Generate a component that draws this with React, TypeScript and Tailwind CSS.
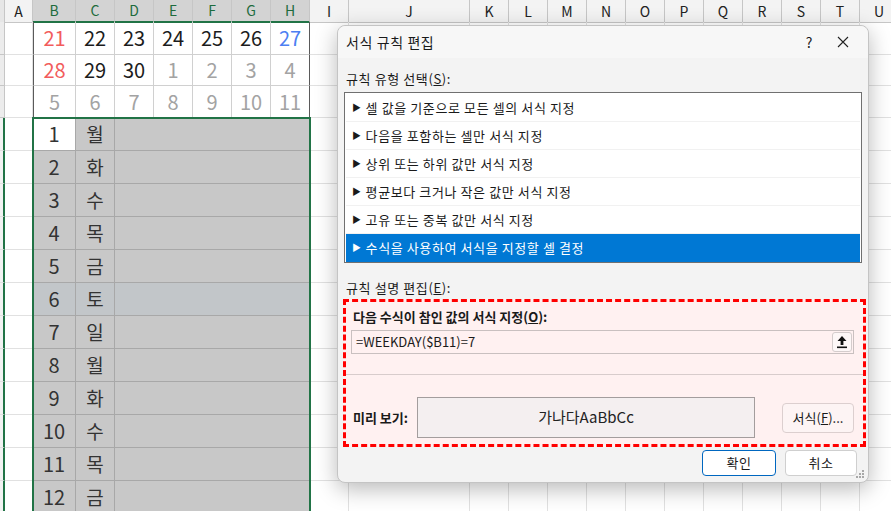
import React from 'react';

const COLS = '5px 28px 43px 39px 39px 39px 39px 39px 39px 39px 121px 39px 39px 39px 39px 39px 39px 39px 39px 39px 39px 39px';
const LETTERS = ['A', 'B', 'C', 'D', 'E', 'F', 'G', 'H', 'I', 'J', 'K', 'L', 'M', 'N', 'O', 'P', 'Q', 'R', 'S', 'T', 'U'];
const FONT = { fontFamily: '"Noto Sans CJK KR", "Noto Sans", sans-serif' };

const RED = 'text-[#f25c5c]';
const BLUE = 'text-[#4d7ff2]';
const INK = 'text-[#1c1c1c]';
const DIM = 'text-[#a3a3a3]';

const calendar: { h: number; cells: [number, string][] }[] = [
  { h: 33, cells: [[21, RED], [22, INK], [23, INK], [24, INK], [25, INK], [26, INK], [27, BLUE]] },
  { h: 31, cells: [[28, RED], [29, INK], [30, INK], [1, DIM], [2, DIM], [3, DIM], [4, DIM]] },
  { h: 32, cells: [[5, DIM], [6, DIM], [7, DIM], [8, DIM], [9, DIM], [10, DIM], [11, DIM]] },
];

const days = ['월', '화', '수', '목', '금', '토', '일', '월', '화', '수', '목', '금'];

const ruleTypes = [
  '셀 값을 기준으로 모든 셀의 서식 지정',
  '다음을 포함하는 셀만 서식 지정',
  '상위 또는 하위 값만 서식 지정',
  '평균보다 크거나 작은 값만 서식 지정',
  '고유 또는 중복 값만 서식 지정',
  '수식을 사용하여 서식을 지정할 셀 결정',
];

function BlankCells() {
  return (
    <>
      {LETTERS.slice(8).map((l) => (
        <div key={l} className="border-b border-r border-[#e1e1e1]" />
      ))}
    </>
  );
}

function Sheet() {
  return (
    <div className="w-[899px]">
      {/* 열 머리글 */}
      <div className="grid h-[22px]" style={{ gridTemplateColumns: COLS }}>
        <div className="border-b border-r border-[#c6c6c6] bg-[#e6e6e6]" />
        {LETTERS.map((l) => {
          const sel = l >= 'B' && l <= 'H';
          return (
            <div
              key={l}
              className={
                'flex items-center justify-center border-r border-[#c6c6c6] text-[14px] ' +
                (sel ? 'border-b-2 border-b-[#217346] bg-[#d3d3d3] text-[#1d6b3c]' : 'border-b bg-[#f3f3f3] text-[#222]')
              }
            >
              {l}
            </div>
          );
        })}
      </div>

      {/* 달력 위쪽 */}
      {calendar.map((row, r) => (
        <div key={r} className="grid" style={{ gridTemplateColumns: COLS, height: row.h }}>
          <div className="border-b border-r border-[#c6c6c6] bg-[#ececec]" />
          <div className="border-b border-r border-[#e1e1e1]" />
          {row.cells.map(([n, color], i) => (
            <div
              key={i}
              className={
                'flex items-center justify-center border-b border-[#d0d0d0] text-[20px] ' +
                color +
                (i === 0 ? ' border-l border-l-[#5a5a5a]' : '') +
                (i === 6 ? ' border-r border-r-[#5a5a5a]' : ' border-r')
              }
            >
              {n}
            </div>
          ))}
          <BlankCells />
        </div>
      ))}

      {/* 선택된 목록 */}
      {days.map((d, i) => {
        const bg = i === 5 ? 'bg-[#c2c6c9]' : 'bg-[#c8c8c8]';
        return (
          <div key={i} className="grid h-[33px]" style={{ gridTemplateColumns: COLS }}>
            <div className="border-b border-r-2 border-[#e1e1e1] border-r-[#217346] bg-[#f2f2f2]" />
            <div className="border-b border-r border-[#e1e1e1]" />
            <div
              className={
                'flex items-center justify-center border-b border-r border-[#a8a8a8] text-[20px] text-[#333] ' +
                (i === 0 ? 'bg-white' : bg)
              }
            >
              {i + 1}
            </div>
            <div className={'flex items-center justify-center border-b border-r border-[#a8a8a8] text-[19px] text-[#333] ' + bg}>
              {d}
            </div>
            <div className={'col-span-5 border-b border-[#a8a8a8] ' + bg} />
            <BlankCells />
          </div>
        );
      })}
    </div>
  );
}

function CollapseIcon() {
  return (
    <svg width="12" height="14" viewBox="0 0 12 14">
      <path d="M6 1 L10.5 6 L7.4 6 L7.4 10 L4.6 10 L4.6 6 L1.5 6 Z" fill="#111" />
      <rect x="1" y="11.5" width="10" height="1.6" fill="#111" />
    </svg>
  );
}

function Grip() {
  return (
    <svg width="10" height="10" viewBox="0 0 10 10" className="absolute bottom-[3px] right-[3px]">
      {[
        [7, 1], [4, 4], [7, 4], [1, 7], [4, 7], [7, 7],
      ].map(([x, y], i) => (
        <rect key={i} x={x} y={y} width="2" height="2" fill="#a8a8a8" />
      ))}
    </svg>
  );
}

function Dialog() {
  return (
    <div className="absolute left-[337px] top-[25px] h-[458px] w-[532px] rounded-lg border border-[#c4c4c4] bg-[#f3f3f3] text-[13px] tracking-[0.6px] text-[#1a1a1a] shadow-[0_6px_22px_rgba(0,0,0,0.28)]">
      {/* 제목 표시줄 */}
      <div className="flex h-[32px] items-center rounded-t-lg bg-[#f7f7f7] pl-[8px]">
        <span className="text-[14px]">서식 규칙 편집</span>
        <span className="ml-auto mr-[24px] text-[14px]">?</span>
        <svg width="12" height="12" viewBox="0 0 12 12" className="mr-[19px]">
          <path d="M1 1 L11 11 M11 1 L1 11" stroke="#222" strokeWidth="1.1" />
        </svg>
      </div>

      <div className="px-[6px]">
        <p className="mt-[12px] h-[18px] pl-[2px] leading-[18px]">
          규칙 유형 선택(<span className="underline">S</span>):
        </p>
        <ul className="mt-[4px] h-[171px] border border-[#707070] bg-white p-px">
          {ruleTypes.map((t, i) => {
            const active = i === ruleTypes.length - 1;
            return (
              <li
                key={t}
                className={
                  'flex h-[28px] items-center gap-[4px] pl-[6px] ' +
                  (active ? 'bg-[#0078d4] text-white' : 'border-b border-[#f1f1f1]')
                }
              >
                <span className="text-[9px]">▶</span>
                <span>{t}</span>
              </li>
            );
          })}
        </ul>

        <p className="mt-[16px] h-[18px] pl-[2px] leading-[18px]">
          규칙 설명 편집(<span className="underline">E</span>):
        </p>

        <div className="-ml-px -mr-[4px] mt-[2px] h-[148px] border-[3px] border-dashed border-[#ff0000] bg-[#fff1f1] pl-[5px] pr-[9px]">
          <p className="mt-[6px] h-[18px] pl-[2px] font-bold leading-[18px] tracking-normal">
            다음 수식이 참인 값의 서식 지정(<span className="underline">O</span>):
          </p>
          <div className="mt-[4px] flex h-[24px] items-center border border-[#c9c0c0] pl-[4px] pr-px">
            <span className="text-[13px] tracking-normal">=WEEKDAY($B11)=7</span>
            <button className="ml-auto flex h-[20px] w-[20px] items-center justify-center rounded-[3px] border border-[#d4cccc] bg-[#fdf7f7]">
              <CollapseIcon />
            </button>
          </div>
          <div className="mt-[20px] -ml-[5px] -mr-[9px] border-t border-[#d8cccc]" />
          <div className="mt-[22px] flex items-center">
            <span className="w-[66px] pl-[2px] font-bold tracking-normal">미리 보기:</span>
            <div className="flex h-[41px] w-[338px] items-center justify-center border border-[#a39d9d] bg-[#f4eff0] text-[15px] tracking-normal text-[#222]">
              가나다AaBbCc
            </div>
            <button className="ml-auto flex h-[30px] w-[72px] items-center justify-center rounded-[4px] border border-[#dccfcf] bg-[#fdf4f4] tracking-normal">
              서식(<span className="underline">F</span>)...
            </button>
          </div>
        </div>

        <div className="mr-[5px] mt-[3px] flex justify-end gap-[9px]">
          <button className="h-[26px] w-[74px] rounded-[4px] border border-[#0067c0] bg-white">확인</button>
          <button className="h-[26px] w-[72px] rounded-[4px] border border-[#cfcfcf] bg-white">취소</button>
        </div>
      </div>
      <Grip />
    </div>
  );
}

export default function App() {
  return (
    <div className="relative h-[511px] w-[891px] overflow-hidden bg-white" style={FONT}>
      <Sheet />
      {/* 선택 영역 테두리 */}
      <div className="pointer-events-none absolute left-[32px] top-[117px] h-[400px] w-[279px] border-2 border-[#217346]" />
      <Dialog />
    </div>
  );
}
